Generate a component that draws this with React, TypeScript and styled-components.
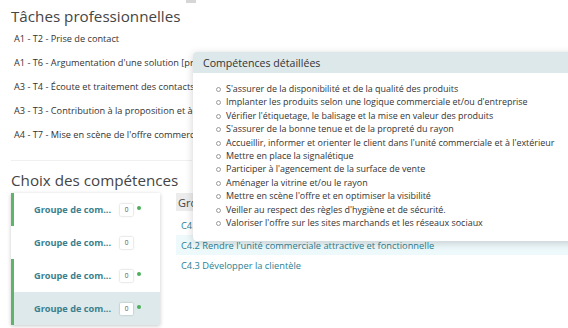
import styled, { createGlobalStyle } from "styled-components";

const GlobalStyle = createGlobalStyle`
  * { box-sizing: border-box; }
  html, body { margin: 0; padding: 0; background: #fff; }
  body {
    font-family: "Open Sans", "Liberation Sans", sans-serif;
    color: #3a3a3a;
    width: 568px;
    height: 328px;
    overflow: hidden;
  }
`;

const Page = styled.div`
  position: relative;
  padding: 6px 0 0 11px;
  width: 568px;
  height: 328px;
  overflow: hidden;
`;

const ScrollThumb = styled.div`
  position: absolute;
  top: 0;
  left: 186px;
  width: 10px;
  height: 3px;
  background: #d6d6d6;
`;

const Title = styled.h2<{ $top?: number }>`
  margin: ${(p) => p.$top ?? 0}px 0 0 0;
  font-size: 15.2px;
  line-height: 20px;
  font-weight: 400;
  color: #454545;
`;

const TaskList = styled.ul`
  list-style: none;
  margin: 0;
  padding: 0 0 0 3px;
`;

const TaskRow = styled.li`
  height: 24px;
  display: flex;
  align-items: center;
  font-size: 9.2px;
  color: #333;
  white-space: nowrap;
`;

const Divider = styled.hr`
  margin: 14px 0 0 0;
  width: 181px;
  border: 0;
  border-top: 1px solid #f0f0f0;
`;

const ChoiceGrid = styled.div`
  display: grid;
  grid-template-columns: 149px 1fr;
  column-gap: 16px;
  margin-top: 3px;
`;

const GroupCard = styled.div`
  background: #fff;
  box-shadow: 0 1px 4px rgba(0, 0, 0, 0.22);
  display: flex;
  flex-direction: column;
`;

const GroupRow = styled.div<{ $active: boolean; $selected?: boolean }>`
  height: 33px;
  display: flex;
  align-items: center;
  padding-left: 20px;
  border-left: 3px solid ${(p) => (p.$active ? "#5fb36a" : "transparent")};
  background: ${(p) => (p.$selected ? "#dde9ea" : "#fff")};
`;

const GroupLabel = styled.span`
  font-size: 9.2px;
  font-weight: 700;
  color: #3b7f8e;
  width: 86px;
  white-space: nowrap;
`;

const CountBadge = styled.span`
  width: 13px;
  height: 12px;
  display: inline-flex;
  align-items: center;
  justify-content: center;
  font-size: 6.5px;
  color: #555;
  background: #fff;
  box-shadow: 0 0 2px rgba(0, 0, 0, 0.3);
  border-radius: 1px;
`;

const Dot = styled.span`
  width: 4px;
  height: 4px;
  border-radius: 50%;
  background: #4caf5a;
  margin: -4px 0 0 4px;
`;

const CompTable = styled.div`
  display: flex;
  flex-direction: column;
`;

const CompHead = styled.div`
  height: 18px;
  display: flex;
  align-items: center;
  padding-left: 2px;
  background: #ececec;
  font-size: 11px;
  color: #444;
  margin-bottom: 4px;
`;

const CompRow = styled.div<{ $hl?: boolean }>`
  height: 20px;
  display: flex;
  align-items: center;
  padding-left: 5px;
  font-size: 9.3px;
  color: #2c7f94;
  white-space: nowrap;
  background: ${(p) => (p.$hl ? "#eef9fb" : "transparent")};
`;

const Popover = styled.div`
  position: absolute;
  top: 52px;
  left: 193px;
  width: 400px;
  background: #fff;
  border-radius: 4px 0 0 4px;
  box-shadow: 0 2px 8px rgba(0, 0, 0, 0.18);
  overflow: hidden;
`;

const PopHead = styled.div`
  height: 21px;
  display: flex;
  align-items: center;
  padding-left: 10px;
  background: #dde8ea;
  font-size: 10.6px;
  color: #333;
`;

const PopList = styled.ul`
  list-style: none;
  margin: 0;
  padding: 9px 0 12px 22px;
`;

const PopItem = styled.li`
  position: relative;
  height: 13.4px;
  line-height: 13.4px;
  padding-left: 11px;
  font-size: 8.95px;
  color: #333;
  white-space: nowrap;
  &::before {
    content: "";
    position: absolute;
    left: 1px;
    top: 5px;
    width: 3px;
    height: 3px;
    border: 0.8px solid #9a9a9a;
    border-radius: 50%;
  }
`;

const tasks = [
  "A1 - T2 - Prise de contact",
  "A1 - T6 - Argumentation d'une solution [proposition commerciale]",
  "A3 - T4 - Écoute et traitement des contacts",
  "A3 - T3 - Contribution à la proposition et à la vente",
  "A4 - T7 - Mise en scène de l'offre commerciale",
];

const groups = [
  { active: true, dot: true, selected: false },
  { active: false, dot: false, selected: false },
  { active: true, dot: true, selected: false },
  { active: true, dot: true, selected: true },
];

const details = [
  "S'assurer de la disponibilité et de la qualité des produits",
  "Implanter les produits selon une logique commerciale et/ou d'entreprise",
  "Vérifier l'étiquetage, le balisage et la mise en valeur des produits",
  "S'assurer de la bonne tenue et de la propreté du rayon",
  "Accueillir, informer et orienter le client dans l'unité commerciale et à l'extérieur",
  "Mettre en place la signalétique",
  "Participer à l'agencement de la surface de vente",
  "Aménager la vitrine et/ou le rayon",
  "Mettre en scène l'offre et en optimiser la visibilité",
  "Veiller au respect des règles d'hygiène et de sécurité.",
  "Valoriser l'offre sur les sites marchands et les réseaux sociaux",
];

function App() {
  return (
    <>
      <GlobalStyle />
      <Page>
        <ScrollThumb />
        <Title>Tâches professionnelles</Title>
        <TaskList>
          {tasks.map((t) => (
            <TaskRow key={t}>{t}</TaskRow>
          ))}
        </TaskList>
        <Divider />
        <Title $top={9}>Choix des compétences</Title>
        <ChoiceGrid>
          <GroupCard>
            {groups.map((g, i) => (
              <GroupRow key={i} $active={g.active} $selected={g.selected}>
                <GroupLabel>Groupe de com...</GroupLabel>
                <CountBadge>0</CountBadge>
                {g.dot && <Dot />}
              </GroupRow>
            ))}
          </GroupCard>
          <CompTable>
            <CompHead>Groupe de compétences 4</CompHead>
            <CompRow>C4.1 Assurer la vente</CompRow>
            <CompRow $hl>C4.2 Rendre l'unité commerciale attractive et fonctionnelle</CompRow>
            <CompRow>C4.3 Développer la clientèle</CompRow>
          </CompTable>
        </ChoiceGrid>
        <Popover>
          <PopHead>Compétences détaillées</PopHead>
          <PopList>
            {details.map((d) => (
              <PopItem key={d}>{d}</PopItem>
            ))}
          </PopList>
        </Popover>
      </Page>
    </>
  );
}

export default App;
